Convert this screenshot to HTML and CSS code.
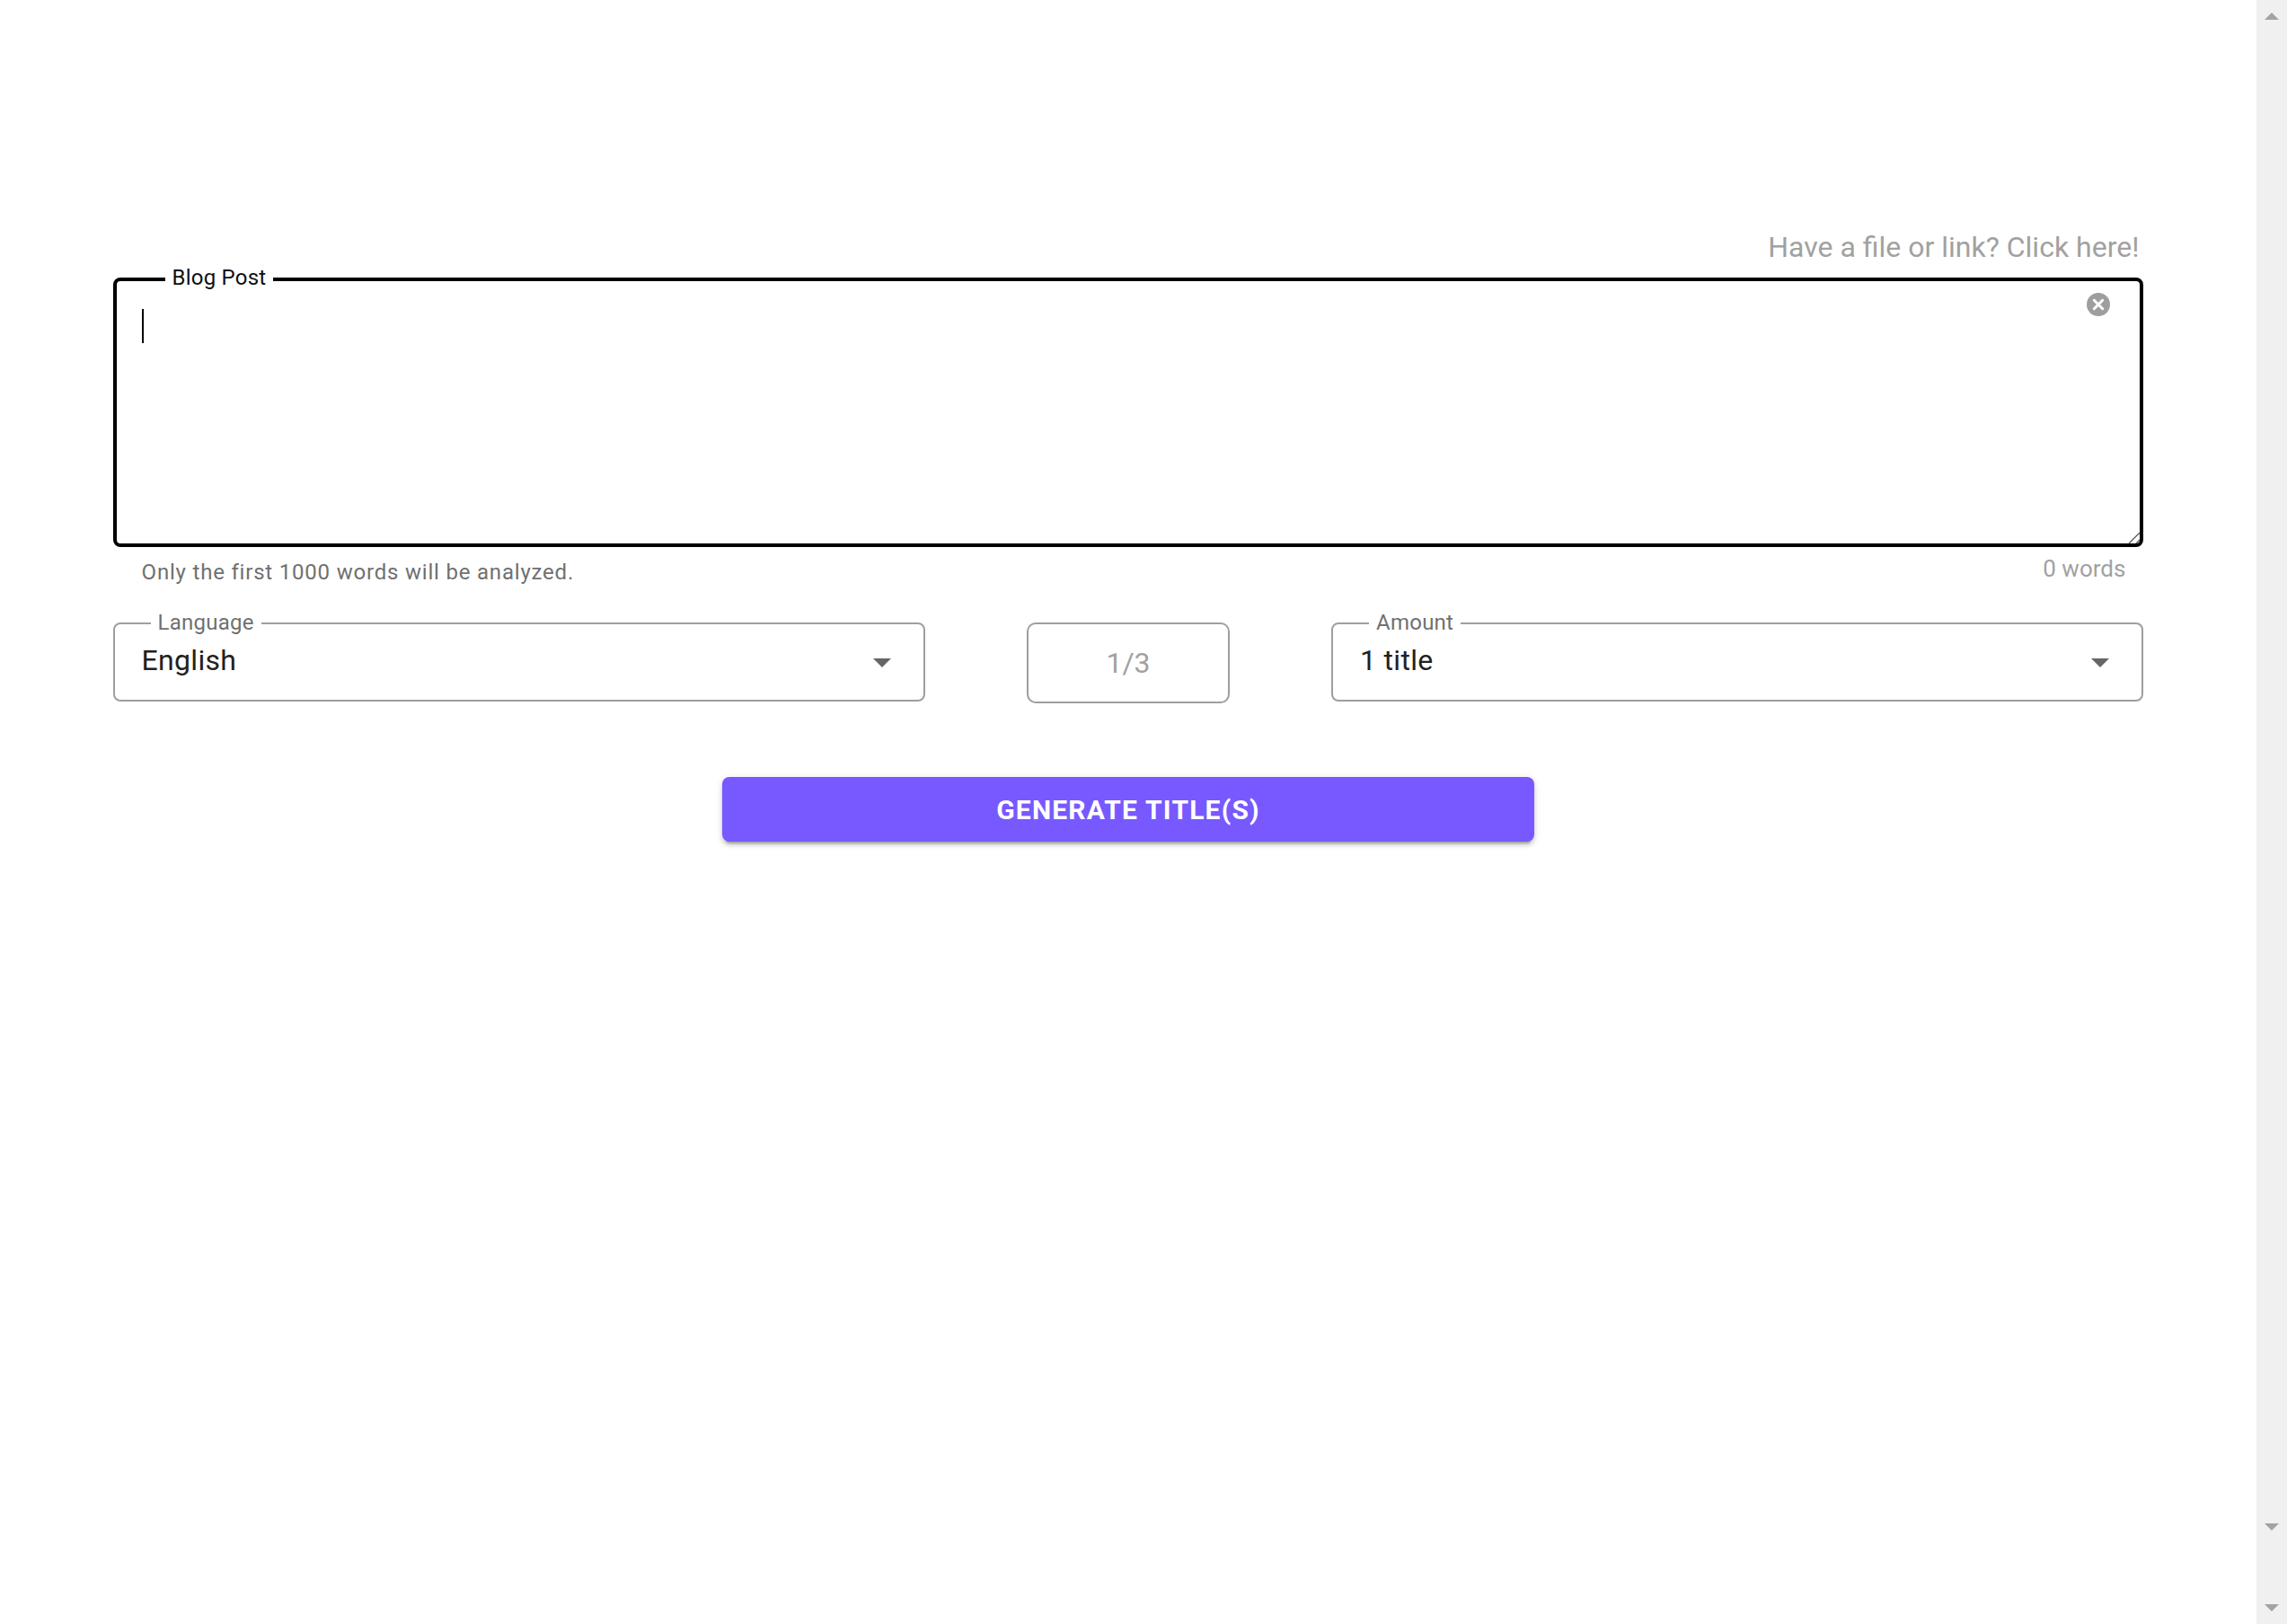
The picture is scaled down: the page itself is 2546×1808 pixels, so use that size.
FILE: index.html
```html
<!DOCTYPE html>
<html lang="en">
<head>
<meta charset="utf-8">
<meta name="viewport" content="width=device-width, initial-scale=1">
<title>Blog title generator</title>
<link rel="stylesheet" href="styles.css">
</head>
<body>
<div class="page">
  <main class="content">
    <form class="form">
      <a class="file-link" href="#">Have a file or link? Click here!</a>
      <div class="field field-active">
        <label class="field-label" for="post">Blog Post</label>
        <textarea class="post" id="post"></textarea>
        <span class="cursor"></span>
        <button class="clear" type="button" aria-label="Clear">
          <svg viewBox="0 0 26 26" width="26" height="26"><circle cx="13" cy="13" r="13" fill="#9e9e9e"/><path d="M8.3 8.3l9.4 9.4M17.7 8.3l-9.4 9.4" stroke="#fff" stroke-width="3" stroke-linecap="round"/></svg>
        </button>
        <svg class="grip" viewBox="0 0 12 12" width="12" height="12"><path d="M0 12L12 0M8 12L12 8" stroke="#555" stroke-width="1.3"/></svg>
      </div>
      <div class="notes">
        <p class="helper">Only the first 1000 words will be analyzed.</p>
        <p class="count">0 words</p>
      </div>
      <div class="options">
        <div class="field">
          <label class="field-label" for="language">Language</label>
          <select class="select" id="language"><option>English</option></select>
          <svg class="arrow" viewBox="0 0 20 10" width="20" height="10"><path d="M0 0h20L10 10z" fill="#666"/></svg>
        </div>
        <button class="pager" type="button">1/3</button>
        <div class="field">
          <label class="field-label" for="amount">Amount</label>
          <select class="select" id="amount"><option>1 title</option></select>
          <svg class="arrow" viewBox="0 0 20 10" width="20" height="10"><path d="M0 0h20L10 10z" fill="#666"/></svg>
        </div>
      </div>
      <button class="generate" type="button">GENERATE TITLE(S)</button>
    </form>
  </main>
  <aside class="scrollbar" aria-hidden="true">
    <svg viewBox="0 0 16 8" width="16" height="8"><path d="M0 8h16L8 0z" fill="#a3a3a3"/></svg>
    <div class="scrollbar-end">
      <svg viewBox="0 0 16 8" width="16" height="8"><path d="M0 0h16L8 8z" fill="#a3a3a3"/></svg>
      <svg viewBox="0 0 16 8" width="16" height="8"><path d="M0 0h16L8 8z" fill="#a3a3a3"/></svg>
    </div>
  </aside>
</div>
</body>
</html>
```
FILE: styles.css
```css
* { box-sizing: border-box; }

body {
  margin: 0;
  background: #fff;
  font-family: Roboto, "Liberation Sans", sans-serif;
}

button, select, textarea { font-family: inherit; }
svg { display: block; }
p { margin: 0; }

.page {
  display: grid;
  grid-template-columns: 1fr 34px;
  min-height: 100vh;
}

.content { padding: 255px 5% 0; }

.form {
  display: flex;
  flex-direction: column;
}

.file-link {
  align-self: flex-end;
  margin-bottom: 14px;
  padding-right: 5px;
  color: #a1a1a1;
  font-size: 32px;
  line-height: 40px;
  text-decoration: none;
}

.field { position: relative; }

.field-label {
  position: absolute;
  top: -16px;
  left: 42px;
  padding: 0 8px;
  background: #fff;
  color: #707070;
  font-size: 24px;
  letter-spacing: 0.009375em;
  line-height: 32px;
}

.field-active .field-label {
  left: 58px;
  color: #111;
}

.post {
  display: block;
  width: 100%;
  height: 300px;
  padding: 28px;
  border: 4px solid #000;
  border-radius: 8px;
  outline: none;
  resize: none;
  background: #fff;
  font-size: 32px;
}

.cursor {
  position: absolute;
  top: 35px;
  left: 32px;
  width: 2px;
  height: 38px;
  background: #000;
}

.clear {
  position: absolute;
  top: 17px;
  right: 37px;
  padding: 0;
  border: 0;
  background: none;
}

.grip {
  position: absolute;
  right: 4px;
  bottom: 4px;
}

.notes {
  display: flex;
  justify-content: space-between;
  padding: 0 20px 0 32px;
  margin-bottom: 40px;
  line-height: 32px;
}

.helper {
  padding-top: 12px;
  color: #707070;
  font-size: 24px;
  letter-spacing: 0.0333em;
}

.count {
  padding-top: 8px;
  color: #a1a1a1;
  font-size: 26px;
}

.options {
  display: grid;
  grid-template-columns: 8fr 2fr 8fr;
  column-gap: 5%;
  align-items: start;
}

.select {
  display: block;
  width: 100%;
  height: 88px;
  padding: 0 64px 4px 30px;
  border: 2px solid #9e9e9e;
  border-radius: 8px;
  appearance: none;
  background: #fff;
  color: #212121;
  font-size: 32px;
  letter-spacing: 0.009375em;
}

.arrow {
  position: absolute;
  top: 40px;
  right: 38px;
  pointer-events: none;
}

.pager {
  height: 90px;
  padding: 0;
  border: 2px solid #9e9e9e;
  border-radius: 10px;
  background: #fff;
  color: #a1a1a1;
  font-size: 32px;
}

.generate {
  align-self: center;
  width: 40%;
  height: 72px;
  margin-top: 82px;
  padding: 0;
  border: 0;
  border-radius: 8px;
  background: #7759ff;
  box-shadow: 0 6px 2px -4px rgba(0, 0, 0, 0.2), 0 4px 4px rgba(0, 0, 0, 0.14), 0 2px 10px rgba(0, 0, 0, 0.12);
  color: #fff;
  font-size: 30px;
  font-weight: 700;
  letter-spacing: 0.04em;
}

.scrollbar {
  display: flex;
  flex-direction: column;
  align-items: center;
  justify-content: space-between;
  padding: 14px 0;
  background: #f0f0f0;
}

.scrollbar-end {
  display: grid;
  row-gap: 82px;
}
```
